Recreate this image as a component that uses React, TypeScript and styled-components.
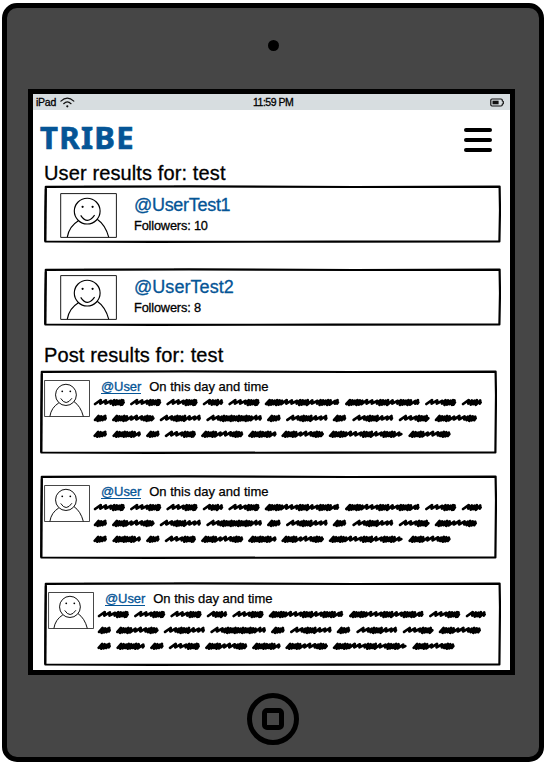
import React from "react";
import styled, { createGlobalStyle } from "styled-components";

const INK = "#000";
const BLUE = "#055596";

const GlobalStyle = createGlobalStyle`
  *, *::before, *::after { box-sizing: border-box; }
  body {
    margin: 0;
    background: #fff;
    color: ${INK};
    font-family: "Liberation Sans", Arial, sans-serif;
    overflow: hidden;
  }
`;

const Device = styled.div`
  width: 542px;
  height: 759px;
  margin: 3px 2px 2px;
  border: 5px solid ${INK};
  border-radius: 15px;
  background: #464646;
  display: flex;
  flex-direction: column;
  align-items: center;
`;

const Camera = styled.div`
  width: 11px;
  height: 11px;
  margin: 32px 0 38px;
  border-radius: 50%;
  background: ${INK};
  flex: none;
`;

const Screen = styled.main`
  width: 487px;
  height: 586px;
  margin-right: 3px;
  border: 5px solid ${INK};
  background: #fff;
  flex: none;
  overflow: hidden;
`;

const HomeButton = styled.div`
  width: 52px;
  height: 52px;
  margin-top: 18px;
  border: 5px solid ${INK};
  border-radius: 50%;
  display: grid;
  place-items: center;
  flex: none;
`;

const HomeGlyph = styled.div`
  width: 22px;
  height: 22px;
  border: 5px solid ${INK};
  border-radius: 5px;
`;

const StatusBar = styled.div`
  height: 16px;
  padding: 0 6px 0 3px;
  background: #d7dde0;
  display: grid;
  grid-template-columns: 217px 1fr auto;
  align-items: center;
`;

const StatusText = styled.span<{ $spacing: number }>`
  font-size: 10.5px;
  line-height: 15px;
  letter-spacing: ${(p) => p.$spacing}px;
  -webkit-text-stroke: 0.3px currentColor;
`;

const StatusLeft = styled.div`
  display: flex;
  gap: 4px;
  align-items: center;
`;

const Header = styled.header`
  height: 50px;
  padding: 0 18px 0 7px;
  display: flex;
  justify-content: space-between;
`;

const Brand = styled.h1`
  margin: 5px 0 0;
  color: ${BLUE};
  font: 700 31px/44px "Noto Sans", sans-serif;
  letter-spacing: 1.35px;
  -webkit-text-stroke: 0.7px ${BLUE};
`;

const MenuButton = styled.button`
  width: 28px;
  height: 24px;
  margin: 18px 0 0;
  padding: 0;
  border: 0;
  background: none;
  display: flex;
  flex-direction: column;
  justify-content: space-between;
`;

const MenuBar = styled.span`
  width: 100%;
  height: 4px;
  border-radius: 2px;
  background: ${INK};
`;

const Heading = styled.h2`
  height: 25px;
  margin: 0 0 0 11px;
  font-size: 20px;
  font-weight: 400;
  line-height: 26px;
  letter-spacing: 0.12px;
  -webkit-text-stroke: 0.3px currentColor;
`;

const UserList = styled.section`
  display: flex;
  flex-direction: column;
  gap: 25px;
  padding: 0 9px 0 11px;
  margin-bottom: 16px;
`;

const PostList = styled.section`
  display: flex;
  flex-direction: column;
  gap: 21px;
  padding: 3px 0 0 7px;
`;

const UserCard = styled.article<{ $top: number }>`
  position: relative;
  width: 457px;
  height: 58px;
  padding: ${(p) => p.$top}px 0 0 16px;
  display: flex;
  gap: 17px;
`;

const PostCard = styled.article<{ $shifted?: boolean }>`
  position: relative;
  width: 457px;
  height: 84px;
  margin: ${(p) => (p.$shifted ? "2px 0 0 4px" : "0")};
  padding: 10px 0 0 4px;
  display: flex;
  gap: 3px;
`;

const Outline = styled.svg`
  position: absolute;
  inset: 0;
  pointer-events: none;
`;

const Portrait = styled.svg<{ $w: number; $h: number }>`
  width: ${(p) => p.$w}px;
  height: ${(p) => p.$h}px;
  flex: none;
`;

const UserInfo = styled.div`
  height: 42px;
  display: flex;
  flex-direction: column;
`;

const UserName = styled.a<{ $spacing: number }>`
  color: ${BLUE};
  font-size: 18px;
  line-height: 24px;
  letter-spacing: ${(p) => p.$spacing}px;
  -webkit-text-stroke: 0.3px currentColor;
`;

const Followers = styled.span`
  font-size: 12.8px;
  line-height: 18px;
  letter-spacing: -0.18px;
  -webkit-text-stroke: 0.3px currentColor;
`;

const PostBody = styled.div`
  display: flex;
  flex-direction: column;
`;

const Byline = styled.div`
  height: 16px;
  padding-left: 8px;
  display: flex;
  align-items: flex-start;
  gap: 8px;
`;

const Author = styled.a`
  height: 14px;
  border-bottom: 1px solid ${BLUE};
  color: ${BLUE};
  font-size: 13px;
  line-height: 14px;
  letter-spacing: -0.08px;
  -webkit-text-stroke: 0.3px currentColor;
`;

const PostTime = styled.span`
  font-size: 13px;
  line-height: 14px;
  -webkit-text-stroke: 0.25px currentColor;
`;

const Scribble = styled.svg`
  display: block;
`;

function SketchOutline({ h }: { h: number }) {
  return (
    <Outline width="457" height={h} viewBox={`0 0 457 ${h}`} fill="none" aria-hidden>
      <path
        d={`M1.8 1.8 L145 1.4 L310 2 L455.6 1.6 L456 25 L455.4 ${h - 1.5} L290 ${h - 1.4} L110 ${h - 1.1} L1.3 ${h - 1.5} L1.4 ${h / 2} Z`}
        stroke={INK}
        strokeWidth="2.2"
        strokeLinejoin="round"
      />
      <path d={`M1.2 ${h - 2} L1.8 4`} stroke={INK} strokeWidth="1.9" />
      <path d="M40 .4 H130" stroke="#777" strokeWidth=".5" />
    </Outline>
  );
}

function Avatar({ w, h }: { w: number; h: number }) {
  return (
    <Portrait $w={w} $h={h} viewBox="0 0 57 45" preserveAspectRatio="none" fill="none" stroke={INK} strokeWidth={1.15} aria-hidden>
      <path d="M.7 .6 H56.4 V44.4 H.7 Z" strokeWidth=".9" />
      <circle cx="27.2" cy="18.1" r="12.9" />
      <path d="M18.4 27.8 Q9 33.5 7.3 44.2 M37.2 26.3 Q45.5 32 48.7 44.2 M20.7 22.4 Q27.3 32.5 34.6 22.2" />
      <circle cx="22.6" cy="13.8" r="1.1" fill={INK} stroke="none" />
      <circle cx="32.6" cy="13.8" r="1.1" fill={INK} stroke="none" />
    </Portrait>
  );
}

/* Start and end of every scribbled word, one array per line. */
const LINES: [number, number][][] = [
  [[0.7, 32], [37, 68.3], [73.3, 104.7], [109.7, 130.3], [135.3, 166.7], [171.7, 246.3], [252, 326.7], [332, 363.3], [368.7, 389]],
  [[0.7, 14], [19, 61.7], [66.7, 108], [113.3, 169], [174, 187.7], [193, 234.7], [239.7, 253.3], [259.3, 300.3], [305.7, 336.7], [341.7, 384]],
  [[0.3, 14], [19.3, 48], [53, 66.7], [71.7, 103], [108, 150.3], [155, 183.7], [188.3, 231], [235.7, 309.7], [315.3, 357.7]],
];

/* True where a word's strokes are spread out, false where they bunch up. */
function isOpen(t: number, width: number) {
  if (width < 15) return t > 8.5;
  if (width < 22) return t < 6 || t > 12;
  if (width < 30) return t > 19;
  if (width < 35) return t < 13;
  if (width < 41.9) return t < 9 || t > 22;
  if (width < 50) return t > 12 && t < 27;
  if (width < 60) return t < 8 || t > 43;
  return (t > 14 && t < 28) || (t > 40 && t < 49) || t > 63;
}

function wordPath(start: number, end: number, y: number) {
  const width = end - start;
  let x = start + 1.4;
  let n = 0;
  let d = `M${x} ${y + 1.7}`;
  while (x < end - 4.2) {
    const open = isOpen(x - start, width);
    const wobble = (n++ % 3) * 0.35;
    const up = Math.min(x + (open ? 5.6 : 3.5), end - 1.8);
    const down = up - (open ? 0.4 : 1);
    d += ` L${up.toFixed(1)} ${(y - 2.2 + wobble).toFixed(1)} L${down.toFixed(1)} ${(y + (open ? 1.3 : 2.6 - wobble)).toFixed(1)}`;
    x = down;
  }
  return `${d} L${end - 1.4} ${y}`;
}

function ScribbledText() {
  return (
    <Scribble width="394" height="48" viewBox="0 0 394 48" fill="none" aria-hidden>
      <path
        d={LINES.map((words, i) => words.map(([a, b]) => wordPath(a, b, 6.3 + i * 15.9)).join(" ")).join(" ")}
        stroke={INK}
        strokeWidth="2.7"
        strokeLinecap="round"
        strokeLinejoin="round"
      />
    </Scribble>
  );
}

const users = [
  { name: "@UserTest1", followers: 10, spacing: -0.3, top: 8 },
  { name: "@UserTest2", followers: 8, spacing: 0.05, top: 7 },
];

const posts = [
  { id: 1, shifted: false },
  { id: 2, shifted: false },
  { id: 3, shifted: true },
];

export default function App() {
  return (
    <>
      <GlobalStyle />
      <Device>
        <Camera />
        <Screen>
          <StatusBar>
            <StatusLeft>
              <StatusText $spacing={-0.25}>iPad</StatusText>
              <svg width="15" height="12" viewBox="0 0 15 12" fill="none" stroke="#111" strokeWidth="1.2" strokeLinecap="round">
                <path d="M.9 5.1 Q7.3 -.9 13.8 5.1 M3.7 7.7 Q7.3 4.2 11 7.7" />
                <circle cx="7.3" cy="10.3" r="1.1" fill="#111" stroke="none" />
              </svg>
            </StatusLeft>
            <StatusText $spacing={-0.5}>11:59 PM</StatusText>
            <svg width="14" height="9" viewBox="0 0 14 9" fill="none">
              <path d="M2 1 H11 Q12.3 1 12.3 2.2 V3 L13.3 3.5 V5.7 L12.3 6.2 V6.8 Q12.3 8 11 8 H2 Q.8 8 .8 6.8 V2.2 Q.8 1 2 1 Z" stroke="#111" strokeWidth="1.2" />
              <path d="M2.5 2.7 H8.6 V6.3 H2.5 Z" fill="#111" />
            </svg>
          </StatusBar>
          <Header>
            <Brand>TRIBE</Brand>
            <MenuButton aria-label="Menu">
              <MenuBar />
              <MenuBar />
              <MenuBar />
            </MenuButton>
          </Header>
          <Heading>User results for: test</Heading>
          <UserList>
            {users.map((user) => (
              <UserCard key={user.name} $top={user.top}>
                <SketchOutline h={58} />
                <Avatar w={57} h={45} />
                <UserInfo>
                  <UserName $spacing={user.spacing}>{user.name}</UserName>
                  <Followers>Followers: {user.followers}</Followers>
                </UserInfo>
              </UserCard>
            ))}
          </UserList>
          <Heading>Post results for: test</Heading>
          <PostList>
            {posts.map((post) => (
              <PostCard key={post.id} $shifted={post.shifted}>
                <SketchOutline h={84} />
                <Avatar w={46} h={37} />
                <PostBody>
                  <Byline>
                    <Author>@User</Author>
                    <PostTime>On this day and time</PostTime>
                  </Byline>
                  <ScribbledText />
                </PostBody>
              </PostCard>
            ))}
          </PostList>
        </Screen>
        <HomeButton>
          <HomeGlyph />
        </HomeButton>
      </Device>
    </>
  );
}
